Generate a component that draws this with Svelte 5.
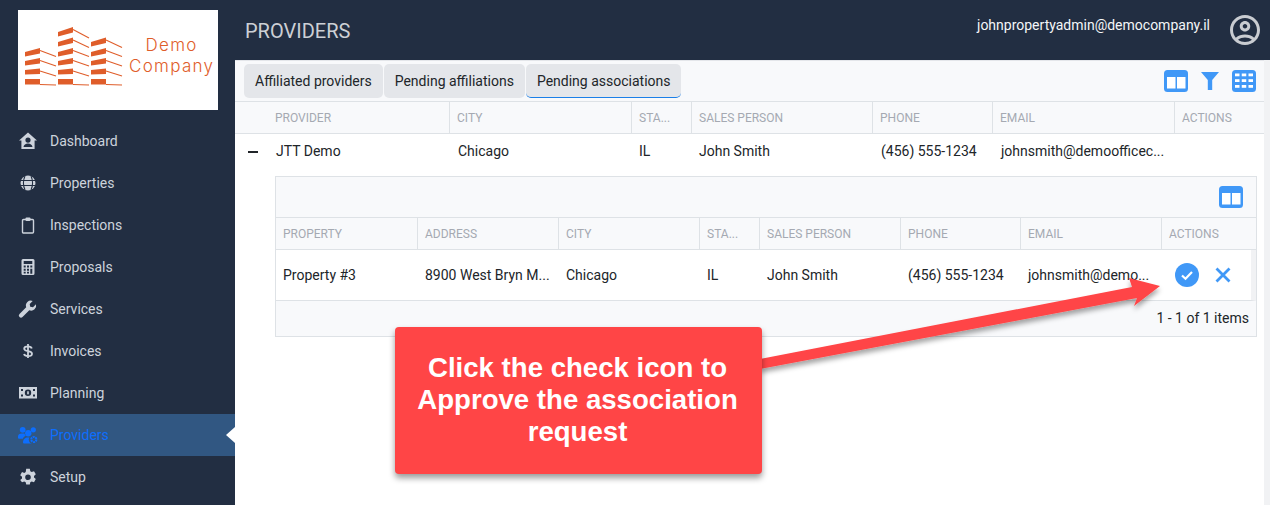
<script>
  const nav = [
    ['Dashboard', 'home'], ['Properties', 'globe'], ['Inspections', 'clip'], ['Proposals', 'calc'],
    ['Services', 'wrench'], ['Invoices', 'dollar'], ['Planning', 'money'], ['Providers', 'users'], ['Setup', 'gear']
  ];
  const outerHead = ['PROVIDER', 'CITY', 'STA...', 'SALES PERSON', 'PHONE', 'EMAIL', 'ACTIONS'];
  const outerRow = ['JTT Demo', 'Chicago', 'IL', 'John Smith', '(456) 555-1234', 'johnsmith@demoofficec...', ''];
  const innerHead = ['PROPERTY', 'ADDRESS', 'CITY', 'STA...', 'SALES PERSON', 'PHONE', 'EMAIL', 'ACTIONS'];
  const innerRow = ['Property #3', '8900 West Bryn M...', 'Chicago', 'IL', 'John Smith', '(456) 555-1234', 'johnsmith@demo...'];
  // Logo floors: column x, solid top y, slant of the solid part, drop of the thin line
  const floors = { 27: [5, 11], 37.5: [4.5, 10], 48: [4, 8.5], 58: [3, 8], 68.5: [1.5, 7.5], 79: [0, 6] };
  const columnsOf = [
    [25, [48, 58, 68.5, 79]],
    [58, [27, 37.5, 48, 58, 68.5, 79]],
    [91, [37.5, 48, 58, 68.5, 79]]
  ];
  const bars = columnsOf.flatMap(([x, ys]) => ys.map((y) => ({ x, y, s: floors[y][0], e: floors[y][1] })));
  const gridCols = [3, 9.75, 16.5];
  const gridRows = [3.5, 9.2, 15];
</script>

{#snippet columns()}
  <svg class="tool" viewBox="0 0 24 22" width="24" height="22" aria-hidden="true">
    <rect width="24" height="22" rx="3.500" fill="#4098f7" />
    <rect x="3" y="7" width="8.500" height="11.500" fill="#fff" />
    <rect x="13" y="7" width="8.500" height="11.500" fill="#fff" />
  </svg>
{/snippet}

<div class="shell">
  <aside class="sidebar">
    <div class="logo">
      <svg class="logo-art" viewBox="24 25 100 62" width="100" height="62" aria-hidden="true">
        {#each bars as b}
          <path d="M{b.x} {b.y + b.s} L{b.x + 15} {b.y} V{b.y + 5.500} L{b.x} {b.y + (b.s ? b.s + 4.500 : 5.500)}Z" fill="#df5d2a" />
          <path d="M{b.x + 15} {b.y + (b.s ? 2.500 : 5.500)} L{b.x + 31} {b.y + b.e}" stroke="#df5d2a" stroke-width="1.100" fill="none" />
        {/each}
      </svg>
      <div class="logo-text"><span>Demo</span><span>Company</span></div>
    </div>
    <nav>
      {#each nav as [label, icon]}
        <div class="nav-item" class:active={label === 'Providers'}>
          <svg class="nav-icon" viewBox="0 0 20 20" width="20" height="20" aria-hidden="true">
            {#if icon === 'home'}
              <path d="M10 1.500 1 9.500h2.400V18h13.200V9.500H19ZM10 6.500a2.600 2.600 0 1 1 0 5.200 2.600 2.600 0 0 1 0-5.200ZM5.500 16c.2-2.400 2.300-3.600 4.500-3.600s4.300 1.200 4.500 3.600Z" fill="currentColor" fill-rule="evenodd" />
            {:else if icon === 'globe'}
              <circle cx="10" cy="10" r="7.500" fill="currentColor" />
              <path d="M2.500 7.500h15M2.500 12.500h15M7 3c-1.800 4-1.800 10 0 14M13 3c1.800 4 1.800 10 0 14" stroke="#222e42" stroke-width="1.100" fill="none" />
            {:else if icon === 'clip'}
              <path d="M5.500 4.500h9a1 1 0 0 1 1 1V17a1 1 0 0 1-1 1h-9a1 1 0 0 1-1-1V5.500a1 1 0 0 1 1-1Z" fill="none" stroke="currentColor" stroke-width="1.400" />
              <rect x="7.500" y="2.500" width="5" height="3.500" rx="1" fill="currentColor" />
            {:else if icon === 'calc'}
              <path fill-rule="evenodd" fill="currentColor" d="M5 2h10a1.500 1.500 0 0 1 1.500 1.500v13A1.500 1.500 0 0 1 15 18H5a1.500 1.500 0 0 1-1.500-1.500v-13A1.500 1.500 0 0 1 5 2Zm.7 2v3h8.600V4ZM5.700 8.500v2h2v-2Zm3.300 0v2h2v-2Zm3.300 0v2h2v-2ZM5.700 11.700v2h2v-2Zm3.300 0v2h2v-2Zm3.300 0v5h2v-5ZM5.700 14.800v1.700h2v-1.700Zm3.300 0v1.700h2v-1.700Z" />
            {:else if icon === 'wrench'}
              <path fill="currentColor" d="M18 5.200 15 8.200l-2.800-.5-.5-2.800 3-3a5 5 0 0 0-6.500 6.400L1.500 15a2.100 2.100 0 0 0 3 3l6.800-6.800A5 5 0 0 0 18 5.200Z" />
            {:else if icon === 'dollar'}
              <path d="M13.800 7.500C13.400 6.200 12 5.300 10 5.300c-2.400 0-3.800 1-3.800 2.400 0 3.400 7.800 1.600 7.800 5 0 1.500-1.600 2.400-4 2.400-2.200 0-3.600-.8-4-2.100M10 3v14" fill="none" stroke="currentColor" stroke-width="1.800" />
            {:else if icon === 'money'}
              <path fill="currentColor" fill-rule="evenodd" d="M1 4h18v11.500H1ZM10 6.600a3.200 3.200 0 1 0 0 6.400 3.200 3.200 0 0 0 0-6.400ZM3 6v2h2V6Zm12 0v2h2V6ZM3 11.500v2h2v-2Zm12 0v2h2v-2Z" />
              <rect x="9.200" y="8.300" width="1.600" height="3" fill="currentColor" />
            {:else if icon === 'users'}
              <circle cx="4.700" cy="4.800" r="2.900" fill="currentColor" />
              <circle cx="15.300" cy="4.800" r="2.600" fill="currentColor" />
              <circle cx="10.300" cy="8.300" r="3.200" fill="currentColor" />
              <path d="M0 11.500C0 9.500 1.500 8.500 3.500 8.500h3c.2 1 .6 1.700 1.300 2.200-1.400.6-2.500 1.500-3 3H1a1 1 0 0 1-1-1ZM5 17.500c0-3 2-5 5-5h4v6H6a1 1 0 0 1-1-1Z" fill="currentColor" />
              <circle cx="15.800" cy="14.500" r="5" fill="#315782" />
              <circle cx="15.800" cy="14.500" r="2.600" fill="none" stroke="currentColor" stroke-width="2" stroke-dasharray="2 .7" />
            {:else}
              <path fill="currentColor" fill-rule="evenodd" d="M8.200 1.800h3.600l.5 2.400 1.400.8 2.300-.8 1.800 3.100-1.800 1.600v1.600l1.800 1.600-1.800 3.100-2.300-.8-1.400.8-.5 2.400H8.200l-.5-2.400-1.400-.8-2.300.8L2.200 13l1.800-1.600V9.800L2.200 8.200 4 5.100l2.300.8 1.400-.8ZM10 7.400a2.800 2.800 0 1 0 0 5.600 2.800 2.800 0 0 0 0-5.600Z" />
            {/if}
          </svg>
          <span>{label}</span>
        </div>
      {/each}
    </nav>
  </aside>

  <div class="content">
    <header class="topbar">
      <h1>PROVIDERS</h1>
      <div class="user">
        <span>johnpropertyadmin@democompany.il</span>
        <svg viewBox="0 0 24 24" width="36" height="36" aria-hidden="true">
          <path fill="#c9ccd1" fill-rule="evenodd" d="M12 2C6.480 2 2 6.480 2 12s4.480 10 10 10 10-4.480 10-10S17.520 2 12 2ZM7.350 18.500C8.660 17.560 10.260 17 12 17s3.340.56 4.650 1.500C15.340 19.440 13.740 20 12 20s-3.340-.56-4.650-1.500Zm10.790-1.380C16.450 15.800 14.320 15 12 15s-4.450.8-6.140 2.120C4.700 15.730 4 13.950 4 12c0-4.420 3.580-8 8-8s8 3.580 8 8c0 1.950-.7 3.730-1.860 5.120ZM12 6C10.070 6 8.500 7.570 8.500 9.500S10.070 13 12 13s3.500-1.570 3.500-3.500S13.930 6 12 6Zm0 5c-.83 0-1.500-.67-1.500-1.500S11.170 8 12 8s1.500.67 1.500 1.500S12.830 11 12 11Z" />
        </svg>
      </div>
    </header>

    <main class="main">
      <div class="toolbar">
        <div class="tabs">
          <button class="tab">Affiliated providers</button>
          <button class="tab">Pending affiliations</button>
          <button class="tab selected">Pending associations</button>
        </div>
        <div class="tools">
          {@render columns()}
          <svg class="tool" viewBox="0 0 18 18" width="18" height="18" aria-hidden="true">
            <path d="M0 0h18l-6.800 8v10H6.800V8Z" fill="#4098f7" />
          </svg>
          <svg class="tool" viewBox="0 0 24 22" width="24" height="22" aria-hidden="true">
            <rect width="24" height="22" rx="3.500" fill="#4098f7" />
            {#each gridRows as y}
              {#each gridCols as x}
                <rect {x} {y} width="4.500" height="2.800" fill="#fff" />
              {/each}
            {/each}
          </svg>
        </div>
      </div>

      <div class="grid-row outer head">
        <div class="expander"></div>
        {#each outerHead as h}<div class="th">{h}</div>{/each}
      </div>
      <div class="grid-row outer body">
        <div class="expander"><span class="minus"></span></div>
        {#each outerRow as c}<div class="td">{c}</div>{/each}
      </div>

      <section class="nested">
        <div class="nested-tools">{@render columns()}</div>
        <div class="grid-row inner head">
          {#each innerHead as h}<div class="th">{h}</div>{/each}
        </div>
        <div class="inner-body">
          <div class="grid-row inner body">
            {#each innerRow as c}<div class="td">{c}</div>{/each}
            <div class="td actions">
              <svg viewBox="0 0 24 24" width="24" height="24" aria-hidden="true">
                <circle cx="12" cy="12" r="12" fill="#4098f7" />
                <path d="m7 12.500 3.500 3.300L17 9" fill="none" stroke="#fff" stroke-width="2.200" />
              </svg>
              <svg viewBox="0 0 16 16" width="16" height="16" aria-hidden="true">
                <path d="m1.500 1.500 13 13m0-13-13 13" fill="none" stroke="#4098f7" stroke-width="2.800" />
              </svg>
            </div>
          </div>
        </div>
        <div class="pager">1 - 1 of 1 items</div>
      </section>
    </main>
  </div>

  <svg class="arrow" viewBox="0 0 1270 505" width="1270" height="505" aria-hidden="true">
    <defs>
      <filter id="arrow-shadow" x="-10%" y="-30%" width="120%" height="170%">
        <feDropShadow dx="0" dy="4" stdDeviation="2.500" flood-color="#000" flood-opacity=".35" />
      </filter>
    </defs>
    <path d="M760 359 1132 287 1129 278 1160 286 1134 306 1137 298 760 369Z" fill="#ff4546" filter="url(#arrow-shadow)" />
  </svg>

  <div class="callout">Click the check icon to Approve the association request</div>
</div>

<style>
  :global(body) { margin: 0; background: #fff; overflow: hidden; }
  .shell {
    display: flex;
    position: relative;
    width: 1270px;
    height: 505px;
    overflow: hidden;
    font-family: Roboto, "Liberation Sans", sans-serif;
    font-size: 14px;
    color: #212529;
  }
  .sidebar {
    flex: 0 0 235px;
    display: flex;
    flex-direction: column;
    background: #222e42;
  }
  .logo {
    display: flex;
    align-items: center;
    box-sizing: border-box;
    width: 200px;
    height: 100px;
    margin: 10px 0 10px 18px;
    padding-left: 6px;
    background: #fff;
  }
  .logo-art { flex: none; margin-bottom: 8px; }
  .logo-text {
    display: flex;
    flex-direction: column;
    align-items: center;
    margin: 0 0 9px 5px;
    font-family: Inter, "Open Sans", sans-serif;
    font-size: 17px;
    font-weight: 300;
    line-height: 21px;
    letter-spacing: 1.300px;
    color: #df5d2a;
  }
  .nav-item {
    position: relative;
    display: flex;
    align-items: center;
    gap: 12px;
    height: 42px;
    padding-left: 18px;
    color: #cdd3dc;
  }
  .nav-icon { flex: none; }
  .nav-item.active { background: #315782; color: #0d6efd; }
  .nav-item.active::after {
    content: '';
    position: absolute;
    right: 0;
    top: 13px;
    border: 8px solid transparent;
    border-left: 0;
    border-right: 9px solid #fff;
  }
  .content { flex: 1; min-width: 0; display: flex; flex-direction: column; }
  .topbar {
    flex: 0 0 60px;
    display: flex;
    justify-content: space-between;
    background: #222e42;
    color: #fff;
  }
  h1 {
    margin: 20px 0 0 10px;
    font-size: 20px;
    line-height: 22px;
    font-weight: 400;
    color: #cdd0d5;
  }
  .user { display: flex; gap: 17px; padding: 14px 7px 0 0; font-size: 14px; line-height: 22px; color: #f4f6f8; }
  .user svg { margin-top: -2px; }
  .main { flex: 1; min-height: 0; box-sizing: border-box; border-right: 6px solid #f1f2f4; }
  .toolbar {
    display: flex;
    justify-content: space-between;
    align-items: center;
    height: 42px;
    box-sizing: border-box;
    padding: 0 8px 0 9px;
    background: #f8f9fb;
    border-top: 1px solid #e4e6ea;
    border-bottom: 1px solid #dee2e6;
  }
  .tabs { display: flex; gap: 1px; }
  .tab {
    height: 34px;
    padding: 0 11px;
    border: 0;
    border-radius: 5px;
    background: #e4e6ea;
    color: #212529;
    font: inherit;
  }
  .tab.selected { border-bottom: 1px solid #1a7fe8; }
  .tools { display: flex; align-items: center; gap: 13px; }
  .tool { display: block; }
  .grid-row { display: grid; }
  .outer { grid-template-columns: 34px 180px 182px 60px 181px 120px 182px 1fr; }
  .inner { grid-template-columns: 141px 141px 141px 60px 141px 120px 141px 1fr; }
  .head { background: #f8f9fb; border-bottom: 1px solid #dee2e6; height: 32px; box-sizing: border-box; }
  .th {
    padding: 0 6px 0 7px;
    line-height: 33px;
    font-size: 12px;
    color: #a5a9b2;
    border-left: 1px solid #dee2e6;
    white-space: nowrap;
    overflow: hidden;
  }
  .outer .th:nth-child(2), .inner .th:first-child { border-left: 0; }
  .outer .th:nth-child(2) { padding-left: 6px; }
  .outer.body { height: 36px; }
  .td {
    padding: 0 6px 0 8px;
    line-height: 35px;
    white-space: nowrap;
  }
  .outer .td:nth-child(2) { padding-left: 7px; }
  .outer .td:nth-child(3), .outer .td:nth-child(6), .outer .td:nth-child(7) { padding-left: 9px; }
  .expander { display: flex; justify-content: center; align-items: center; }
  .minus { display: block; width: 10px; height: 2px; background: #212529; transform: translate(1px, 0); }
  .nested {
    margin: 6px 7px 0 40px;
    border: 1px solid #dee2e6;
    background: #f8f9fb;
  }
  .nested-tools {
    display: flex;
    justify-content: flex-end;
    align-items: center;
    height: 41px;
    box-sizing: border-box;
    padding-right: 13px;
    border-bottom: 1px solid #dee2e6;
  }
  .inner-body {
    background: #fff;
    border-right: 5px solid #f1f2f4;
    border-bottom: 1px solid #dee2e6;
  }
  .inner.body { height: 50px; align-items: center; }
  .inner .td { line-height: 50px; }
  .inner .td:first-child { padding-left: 7px; }
  .td.actions { display: flex; align-items: center; gap: 16px; padding-left: 14px; height: 50px; box-sizing: border-box; }
  .pager { height: 35px; line-height: 35px; text-align: right; padding-right: 7px; }
  .arrow { position: absolute; left: 0; top: 0; pointer-events: none; }
  .callout {
    position: absolute;
    left: 395px;
    top: 327px;
    width: 367px;
    height: 147px;
    box-sizing: border-box;
    padding: 25px 14px 0 12px;
    background: #ff4546;
    border-radius: 4px;
    box-shadow: 0 4px 6px rgba(0, 0, 0, .4);
    color: #fff;
    text-align: center;
    font-family: "Liberation Sans", Arial, sans-serif;
    font-size: 27.600px;
    font-weight: 700;
    line-height: 32px;
  }
</style>
